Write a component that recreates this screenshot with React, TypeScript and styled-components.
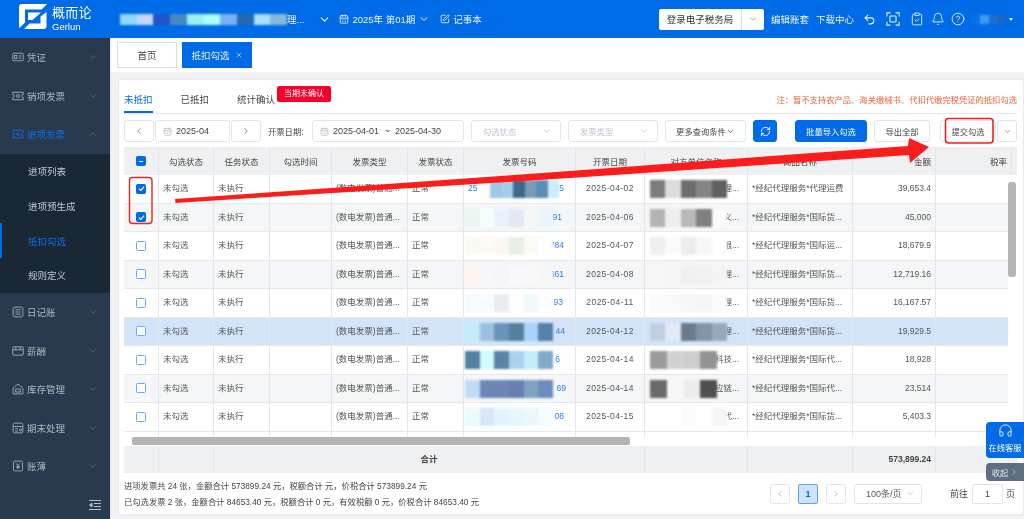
import React from "react";
import styled, { createGlobalStyle } from "styled-components";
import {
  Bell,
  CalendarDays,
  ChevronDown,
  ChevronLeft,
  ChevronRight,
  CircleHelp,
  ClipboardCheck,
  Headphones,
  RefreshCw,
  SquarePen,
  Undo2,
  X,
} from "lucide-react";

const FONT = `"Liberation Sans", "Noto Sans CJK SC", sans-serif`;
const BLUE = "#006be6";
const COLS = "35px 55px 56px 62px 76px 56px 112px 69px 103px 105px 83px 73px";
const HEAD_COLS = "35px 55px 56px 62px 76px 56px 112px 69px 103px 105px 83px 76px 6px";
const FOOT_COLS = "35px 55px 431px 103px 105px 83px 73px";

const GlobalStyle = createGlobalStyle`
  html, body { margin: 0; padding: 0; background: #f0f1f3; }
  * { box-sizing: border-box; }
  #root { width: 1024px; height: 519px; overflow: hidden; }
`;

type NavIconName = "voucher" | "sales" | "journal" | "salary" | "stock" | "closing" | "ledger";

function NavIcon({ name }: { name: NavIconName }) {
  return (
    <svg width="12" height="12" viewBox="0 0 16 16" fill="none" stroke="currentColor" strokeWidth="1.1">
      {name === "voucher" && (
        <>
          <rect x="1" y="3" width="14" height="10" rx="1.5" />
          <rect x="3.5" y="6" width="3" height="4" />
          <path d="M9 6.5h3.5M9 9.5h3.5" />
        </>
      )}
      {name === "sales" && (
        <>
          <path d="M1 3h14v3a2 2 0 0 0 0 4v3H1v-3a2 2 0 0 0 0-4z" />
          <circle cx="8" cy="8" r="2" />
        </>
      )}
      {name === "journal" && (
        <>
          <rect x="1.5" y="1.5" width="13" height="13" rx="2" />
          <path d="M4.5 5h7M4.5 8h7M4.5 11h7" />
        </>
      )}
      {name === "salary" && (
        <>
          <rect x="1" y="2.5" width="14" height="11" rx="1.5" />
          <path d="M1 6.5h14M5 2.5v4M11 2.5v4" />
        </>
      )}
      {name === "stock" && (
        <>
          <path d="M1.5 6.5 8 1.5l6.5 5v8h-13z" />
          <rect x="5" y="8" width="6" height="4" />
        </>
      )}
      {name === "closing" && (
        <>
          <rect x="1.5" y="1.5" width="13" height="13" rx="2" />
          <path d="M1.5 6h13M4 9h4M4 12h4" />
          <circle cx="11.5" cy="10.5" r="1.5" />
        </>
      )}
      {name === "ledger" && (
        <>
          <rect x="2" y="1.5" width="12" height="13" rx="1.5" />
          <path d="M5.5 4.5 8 7.5l2.5-3M8 7.5V12M5.8 8.5h4.4M5.8 10.3h4.4" />
        </>
      )}
    </svg>
  );
}

const LogoMark = styled.svg`
  margin: -5px 0 0;
  flex: none;
`;

function Logo() {
  return (
    <LogoMark width="28" height="25" viewBox="0 0 28 25" fill="#fff">
      <path d="M0 3a3 3 0 0 1 3-3h25l-5.5 5.5H6v13L0.5 24A3 3 0 0 1 0 22z" />
      <path d="M9 8.5h13L13.5 16H9z" />
      <path d="M27.5 8v14a3 3 0 0 1-3 3H5l5.5-5.5H21.5V12.5z" />
    </LogoMark>
  );
}

const Page = styled.div`
  position: relative;
  width: 1024px;
  height: 519px;
  overflow: hidden;
  display: flex;
  flex-direction: column;
  font-family: ${FONT};
  filter: blur(0.3px);
`;

const TopBar = styled.header`
  height: 38px;
  flex: none;
  background: ${BLUE};
  color: #eef5ff;
  display: flex;
  align-items: center;
  font-size: 9.5px;
`;

const Brand = styled.div`
  width: 120px;
  padding-left: 19px;
  display: flex;
  align-items: center;
  gap: 5px;
`;

const BrandText = styled.div`
  display: flex;
  flex-direction: column;
  margin-top: -1px;
  color: #fff;
`;

const BrandName = styled.span`
  font-size: 13px;
  letter-spacing: 0.3px;
  line-height: 16px;
`;

const BrandLatin = styled.span`
  font-size: 9.5px;
  line-height: 11px;
`;

const Mosaic = styled.div<{ $left?: number; $w: number; $h?: number }>`
  display: flex;
  flex: none;
  width: ${(p) => p.$w}px;
  height: ${(p) => p.$h ?? 18}px;
  filter: blur(0.8px);
  ${(p) => (p.$left !== undefined ? `position: absolute; left: ${p.$left}px; top: 5px;` : "")}
`;

const Tile = styled.span<{ $c: string }>`
  flex: 1;
  background: ${(p) => p.$c};
`;

const TopItem = styled.div<{ $ml?: number }>`
  display: flex;
  align-items: center;
  gap: 3px;
  margin-left: ${(p) => p.$ml ?? 0}px;
  white-space: nowrap;
`;

const LoginGroup = styled.div`
  display: flex;
  align-items: center;
  width: 105px;
  height: 21px;
  margin-left: auto;
  background: #fff;
  border-radius: 2px;
  color: #333;
  font-size: 9.5px;
`;

const LoginLabel = styled.span`
  width: 83px;
  text-align: center;
  border-right: 1px solid #dcdfe6;
  line-height: 21px;
`;

const LoginCaret = styled.span`
  flex: 1;
  display: flex;
  justify-content: center;
  color: #9aa0a8;
`;

const TopLink = styled.span<{ $ml: number }>`
  margin-left: ${(p) => p.$ml}px;
  white-space: nowrap;
`;

const TopIcons = styled.div`
  display: flex;
  align-items: center;
  margin-left: 3px;
`;

const IconSlot = styled.span<{ $w: number }>`
  width: ${(p) => p.$w}px;
  display: flex;
  justify-content: center;
`;

const UserCaret = styled.span`
  width: 0;
  height: 0;
  margin: 0 11px 0 3px;
  border-left: 2px solid transparent;
  border-right: 2px solid transparent;
  border-top: 3px solid #fff;
`;

const Body = styled.div`
  flex: 1;
  display: flex;
  min-height: 0;
`;

const Sidebar = styled.nav`
  width: 111px;
  flex: none;
  background: #2a3a4e;
  border-right: 1px solid #e5e7ea;
  display: flex;
  flex-direction: column;
  font-size: 9.5px;
  color: #aeb6c0;
`;

const NavItem = styled.div<{ $active?: boolean }>`
  height: 38.6px;
  flex: none;
  display: flex;
  align-items: center;
  gap: 3px;
  padding: 0 12px 0 12px;
  color: ${(p) => (p.$active ? "#0b6fe5" : "inherit")};
`;

const NavLabel = styled.span`
  flex: 1;
`;

const NavCaret = styled.span<{ $open?: boolean }>`
  display: flex;
  color: #5d6b7c;
  transform: ${(p) => (p.$open ? "rotate(180deg)" : "none")};
`;

const SubMenu = styled.div`
  background: #1a2735;
`;

const SubItem = styled.div<{ $active?: boolean }>`
  height: 34.75px;
  display: flex;
  align-items: center;
  padding-left: ${(p) => (p.$active ? 26 : 28)}px;
  color: ${(p) => (p.$active ? "#0b6fe5" : "#bfc6cf")};
  border-left: ${(p) => (p.$active ? `2px solid ${BLUE}` : "none")};
`;

const Collapse = styled.div`
  margin-top: auto;
  height: 28px;
  display: flex;
  align-items: center;
  justify-content: flex-end;
  padding-right: 9px;
  color: #b7bec8;
`;

const Main = styled.main`
  flex: 1;
  min-width: 0;
  display: flex;
  flex-direction: column;
`;

const TabStrip = styled.div`
  height: 34px;
  flex: none;
  background: #fff;
  display: flex;
  align-items: center;
  gap: 5px;
  padding-left: 6px;
`;

const PageTab = styled.div<{ $active?: boolean }>`
  height: 26px;
  width: ${(p) => (p.$active ? 70 : 60)}px;
  display: flex;
  align-items: center;
  justify-content: center;
  gap: 5px;
  font-size: 9.5px;
  border: 1px solid ${(p) => (p.$active ? BLUE : "#dcdfe6")};
  background: ${(p) => (p.$active ? BLUE : "#fff")};
  color: ${(p) => (p.$active ? "#e6f0ff" : "#444")};
`;

const Content = styled.div`
  flex: 1;
  min-height: 0;
  background: #f0f1f3;
  padding: 7px 0 4px 7px;
`;

const Card = styled.section`
  height: 100%;
  background: #fff;
  border: 1px solid #e9eaec;
  border-radius: 3px;
  padding: 0 6px 0 5px;
  display: flex;
  flex-direction: column;
`;

const TabsRow = styled.div`
  position: relative;
  height: 34px;
  flex: none;
  display: flex;
  align-items: flex-end;
  gap: 28px;
  border-bottom: 1px solid #e6e8ec;
  font-size: 9.5px;
  color: #444;
`;

const InnerTab = styled.div<{ $active?: boolean }>`
  height: 24px;
  line-height: 22px;
  color: ${(p) => (p.$active ? BLUE : "#444")};
  border-bottom: 2px solid ${(p) => (p.$active ? BLUE : "transparent")};
`;

const Badge = styled.span`
  position: absolute;
  left: 153px;
  top: 6px;
  width: 54px;
  height: 16px;
  background: #f5002a;
  border-radius: 2px;
  color: #fff;
  font-size: 8px;
  line-height: 15px;
  text-align: center;
`;

const Note = styled.span`
  margin-left: auto;
  height: 24px;
  line-height: 22px;
  color: #f0603a;
  font-size: 8.3px;
  white-space: nowrap;
`;

const Toolbar = styled.div`
  height: 22px;
  flex: none;
  margin-top: 6px;
  display: flex;
  align-items: center;
  gap: 7px;
  font-size: 9px;
  color: #444;
`;

const Field = styled.div<{ $w: number; $ml?: number; $muted?: boolean }>`
  width: ${(p) => p.$w}px;
  height: 22px;
  flex: none;
  margin-left: ${(p) => p.$ml ?? 0}px;
  border: 1px solid #e3e5ea;
  border-radius: 3px;
  background: #fff;
  display: flex;
  align-items: center;
  justify-content: space-between;
  gap: 4px;
  padding: 0 8px 0 ${(p) => (p.$muted ? 11 : 7)}px;
  color: ${(p) => (p.$muted ? "#c0c4cc" : "#444")};
  font-size: ${(p) => (p.$muted ? 8.3 : 9)}px;
  white-space: nowrap;
`;

const NavBtn = styled.button<{ $ml?: number }>`
  width: 30px;
  height: 22px;
  flex: none;
  margin-left: ${(p) => p.$ml ?? 0}px;
  padding: 0;
  display: flex;
  align-items: center;
  justify-content: center;
  border: 1px solid #e3e5ea;
  border-radius: 3px;
  background: #fff;
  color: #777;
`;

const DateInner = styled.span`
  display: flex;
  align-items: center;
  gap: 4px;
  color: #444;
`;

const Tilde = styled.span`
  width: 16px;
  margin: 0 -4px;
  text-align: center;
`;

const Label = styled.span`
  width: 37px;
  flex: none;
  font-size: 8.3px;
  white-space: nowrap;
`;

const ActionBtn = styled.button<{ $w: number; $ml?: number; $primary?: boolean }>`
  width: ${(p) => p.$w}px;
  height: 22px;
  flex: none;
  margin-left: ${(p) => p.$ml ?? 0}px;
  padding: 0;
  display: flex;
  align-items: center;
  justify-content: center;
  border: 1px solid ${(p) => (p.$primary ? BLUE : "#e3e5ea")};
  border-radius: 3px;
  background: ${(p) => (p.$primary ? BLUE : "#fff")};
  color: ${(p) => (p.$primary ? "#fff" : "#444")};
  font-family: ${FONT};
  font-size: 8.3px;
  white-space: nowrap;
`;

const TableWrap = styled.div`
  margin-top: 5px;
  flex: none;
  font-size: 8.5px;
  color: #555;
`;

const HeadRow = styled.div`
  display: grid;
  grid-template-columns: ${HEAD_COLS};
  height: 28px;
  background: #eff0f2;
  color: #444;
`;

const HeadCell = styled.div<{ $right?: boolean }>`
  display: flex;
  align-items: center;
  justify-content: ${(p) => (p.$right ? "flex-end" : "center")};
  padding: 0 4px;
  border-right: 1px solid #e4e6ec;
`;

const HeadBox = styled(HeadCell)`
  padding: 0;
`;

const ScrollBody = styled.div`
  display: flex;
  height: 262px;
`;

const Rows = styled.div`
  width: 885px;
  overflow: hidden;
`;

const DataRow = styled.div<{ $bg: string }>`
  display: grid;
  grid-template-columns: ${COLS};
  height: 28.5px;
  background: ${(p) => p.$bg};
  border-bottom: 1px solid #e6e8ee;
`;

const Cell = styled.div<{ $align?: "center" | "right"; $pr?: number }>`
  position: relative;
  min-width: 0;
  padding: 0 ${(p) => p.$pr ?? 4}px 0 4px;
  line-height: 27px;
  text-align: ${(p) => p.$align ?? "left"};
  white-space: nowrap;
  border-right: 1px solid #e4e6ec;
`;

const BoxCell = styled(Cell)`
  display: flex;
  align-items: center;
  justify-content: center;
  padding: 0;
`;

const DateText = styled.span`
  letter-spacing: 0.45px;
`;

const InvoiceEdge = styled.span`
  color: #2a80ee;
`;

const InvoiceHead = styled(InvoiceEdge)`
  position: absolute;
  left: 4px;
  top: 0;
`;

const Check = styled.span<{ $on?: boolean }>`
  width: 10px;
  height: 10px;
  border-radius: 1.5px;
  display: flex;
  align-items: center;
  justify-content: center;
  background: ${(p) => (p.$on ? BLUE : "#fff")};
  border: 1px solid ${(p) => (p.$on ? BLUE : "#6aa8f3")};
  color: #fff;
`;

const Minus = styled.span`
  width: 4px;
  height: 1px;
  background: #fff;
`;

const VTrack = styled.div`
  width: 9px;
  flex: none;
  padding-top: 7px;
`;

const VThumb = styled.div`
  width: 8px;
  height: 95px;
  border-radius: 3px;
  background: #b4b4b4;
`;

const HTrack = styled.div`
  height: 9px;
  padding: 0 0 0 8px;
  background: #fff;
`;

const HThumb = styled.div`
  width: 498px;
  height: 8px;
  border-radius: 2px;
  background: #b4b4b4;
`;

const FootRow = styled.div`
  display: grid;
  grid-template-columns: ${FOOT_COLS};
  height: 27px;
  width: 894px;
  background: #eff0f2;
  color: #444;
  font-weight: 700;
`;

const FootCell = styled.div<{ $align?: "center" | "right" }>`
  line-height: 26px;
  padding: 0 4px;
  text-align: ${(p) => p.$align ?? "left"};
  border-right: 1px solid #e4e6ec;
`;

const Footer = styled.div`
  flex: 1;
  display: flex;
  justify-content: space-between;
  align-items: center;
  font-size: 8.3px;
  color: #444;
`;

const Summary = styled.div`
  display: flex;
  flex-direction: column;
  gap: 5.5px;
  line-height: 10.5px;
  margin-top: 1px;
`;

const Pager = styled.div`
  display: flex;
  align-items: center;
  margin-right: 2px;
  font-size: 9px;
`;

const PageBtn = styled.div<{ $on?: boolean }>`
  width: 20px;
  height: 20px;
  margin-right: 8px;
  display: flex;
  align-items: center;
  justify-content: center;
  border: 1px solid ${(p) => (p.$on ? "#5ea1f0" : "#e3e5ea")};
  background: ${(p) => (p.$on ? "#cfe3fb" : "#fff")};
  color: ${(p) => (p.$on ? BLUE : "#bbb")};
  font-weight: ${(p) => (p.$on ? 700 : 400)};
  border-radius: 2px;
`;

const SizeSelect = styled.div`
  width: 68px;
  height: 20px;
  display: flex;
  align-items: center;
  justify-content: space-between;
  padding: 0 6px 0 11px;
  border: 1px solid #e3e5ea;
  border-radius: 2px;
  color: #555;
`;

const GoLabel = styled.span<{ $ml: number }>`
  margin-left: ${(p) => p.$ml}px;
`;

const GoInput = styled.div`
  width: 31px;
  height: 20px;
  margin: 0 3px 0 4px;
  text-align: center;
  line-height: 19px;
  border: 1px solid #e3e5ea;
  border-radius: 2px;
`;

const Service = styled.div`
  position: absolute;
  right: 0;
  top: 422px;
  width: 38px;
  display: flex;
  flex-direction: column;
  align-items: center;
  gap: 5px;
`;

const ServiceBtn = styled.div`
  width: 38px;
  height: 36px;
  padding-top: 1px;
  gap: 4px;
  border-radius: 4px 0 0 4px;
  background: ${BLUE};
  color: #fff;
  font-size: 8.3px;
  line-height: 12px;
  display: flex;
  flex-direction: column;
  align-items: center;
  white-space: nowrap;
`;

const FoldBtn = styled.div`
  width: 38px;
  height: 18px;
  border-radius: 4px 0 0 4px;
  background: #5f6f83;
  color: #dfe3e8;
  font-size: 8.3px;
  display: flex;
  align-items: center;
  justify-content: center;
  gap: 2px;
`;

const Marks = styled.svg`
  position: absolute;
  left: 0;
  top: 0;
  pointer-events: none;
`;

type InvoiceRow = {
  date: string;
  goods: string;
  amount: string;
  head?: boolean;
  tail: string;
  tailEnd: number;
  tailTiles: string[];
  nameEnd: string;
  nameTiles: string[];
  nameW?: number;
  on?: boolean;
  bg: string;
};

const WHITE = "#fff";
const GREY = "#f5f6f7";
const PICKED = "#d3e4f9";
const FREIGHT = "*经纪代理服务*国际货...";
const AGENCY = "*经纪代理服务*国际代...";

const rows: InvoiceRow[] = [
  { date: "2025-04-02", goods: "*经纪代理服务*代理运费", amount: "39,653.4", head: true, tail: "15", tailEnd: 565, tailTiles: ["#fff", "#9cc9e8", "#a8cde8", "#3d6a8c", "#7b9ab8", "#5c8eb3", "#c8effb"], nameEnd: "理...", nameTiles: ["#7c7c7c", "#dcdcdc", "#6d6d6d", "#858585", "#606060"], on: true, bg: WHITE },
  { date: "2025-04-06", goods: FREIGHT, amount: "45,000", tail: "91", tailEnd: 563, tailTiles: ["#eaf6f2", "#f4fdfd", "#e8f2fc", "#e3e8f5", "#f3f6f2", "#eaf4fc"], nameEnd: "义...", nameTiles: ["#b3b3b3", "#eeeeee", "#b8b8b8", "#808080", "#fafafa"], on: true, bg: GREY },
  { date: "2025-04-07", goods: "*经纪代理服务*国际运...", amount: "18,679.9", tail: "784", tailEnd: 565, tailTiles: ["#f8faf3", "#fdf9f3", "#fbf8f3", "#e8efe6", "#fbfaf3", "#fefefe"], nameEnd: "限...", nameTiles: ["#efefef", "#fafafa", "#ececec", "#f7f7f7", "#ffffff"], bg: WHITE },
  { date: "2025-04-08", goods: FREIGHT, amount: "12,719.16", tail: "361", tailEnd: 565, tailTiles: ["#fdf5ee", "#f8f6fc", "#f6f3fb", "#f9f9fc", "#f8f8fa", "#f6f6f7"], nameEnd: "理...", nameTiles: ["#f6f6f6", "#f5f5f5", "#f0f0f0", "#f1f1f1", "#f4f4f4"], bg: GREY },
  { date: "2025-04-11", goods: FREIGHT, amount: "16,167.57", tail: "93", tailEnd: 564, tailTiles: ["#f5faff", "#f5fcff", "#e8ecf1", "#ffffff", "#eef8fd", "#fbfdff"], nameEnd: "理...", nameTiles: ["#fafafa", "#f9f9f9", "#f7f7f7", "#f5f5f5", "#fafafa"], bg: WHITE },
  { date: "2025-04-12", goods: FREIGHT, amount: "19,929.5", tail: "44", tailEnd: 566, tailTiles: ["#c0ecfb", "#9dbfdf", "#6b93b8", "#567f9c", "#a9d2f8", "#5480aa"], nameEnd: "理...", nameTiles: ["#c1cfe0", "#e1eaf5", "#6c7a8a", "#8494a6", "#9aa9ba"], bg: PICKED },
  { date: "2025-04-14", goods: AGENCY, amount: "18,928", tail: "6", tailEnd: 561, tailTiles: ["#53829f", "#d0fcff", "#5983a8", "#a8d3ed", "#c3ecfb", "#7faacb"], nameEnd: "科技...", nameTiles: ["#9a9a9a", "#d1d1d1", "#cdcdcd", "#939393"], nameW: 67, bg: WHITE },
  { date: "2025-04-14", goods: AGENCY, amount: "23,514", tail: "69", tailEnd: 567, tailTiles: ["#c1dbf7", "#6c86b8", "#6c86b8", "#6780ae", "#7fa3bf", "#6d8bbf"], nameEnd: "应链...", nameTiles: ["#6b6b6b", "#f6f6f6", "#ececec", "#4f4f4f"], nameW: 67, bg: GREY },
  { date: "2025-04-15", goods: FREIGHT, amount: "5,403.3", tail: "08", tailEnd: 565, tailTiles: ["#ebfbfd", "#d4e8f9", "#e2f4fb", "#e4f7fd", "#e9f8fd", "#f3fcfe"], nameEnd: "代...", nameTiles: ["#ffffff", "#ffffff", "#fbfbfb", "#ffffff", "#f6f6f6"], bg: WHITE },
];

const heads = ["勾选状态", "任务状态", "勾选时间", "发票类型", "发票状态", "发票号码", "开票日期", "对方单位名称", "商品名称"];
const companyTiles = ["#8fd7ff", "#c5d5fb", "#1f56c8", "#4788c5", "#9cf1f9", "#aefcfb", "#7bb0f2", "#2468b5", "#a7e0fc", "#83bad6"];

function Tiles({ colors }: { colors: string[] }) {
  return (
    <>
      {colors.map((c, i) => (
        <Tile key={i} $c={c} />
      ))}
    </>
  );
}

function NavRow({ icon, label, active, open }: { icon: NavIconName; label: string; active?: boolean; open?: boolean }) {
  return (
    <NavItem $active={active}>
      <NavIcon name={icon} />
      <NavLabel>{label}</NavLabel>
      <NavCaret $open={open}>
        <ChevronDown size={10} />
      </NavCaret>
    </NavItem>
  );
}

export default function App() {
  return (
    <Page>
      <GlobalStyle />
      <TopBar>
        <Brand>
          <Logo />
          <BrandText>
            <BrandName>概而论</BrandName>
            <BrandLatin>Gerlun</BrandLatin>
          </BrandText>
        </Brand>
        <Mosaic $w={167} $h={11}>
          <Tiles colors={companyTiles} />
        </Mosaic>
        <TopItem>理...</TopItem>
        <TopItem $ml={14}>
          <ChevronDown size={13} />
        </TopItem>
        <TopItem $ml={8}>
          <CalendarDays size={10} />
          2025年 第01期
          <ChevronDown size={12} />
        </TopItem>
        <TopItem $ml={10}>
          <SquarePen size={10} />
          记事本
        </TopItem>
        <LoginGroup>
          <LoginLabel>登录电子税务局</LoginLabel>
          <LoginCaret>
            <ChevronDown size={10} />
          </LoginCaret>
        </LoginGroup>
        <TopLink $ml={7}>编辑账套</TopLink>
        <TopLink $ml={7}>下载中心</TopLink>
        <TopIcons>
          <IconSlot $w={24}>
            <Undo2 size={13} />
          </IconSlot>
          <IconSlot $w={24}>
            <svg width="14" height="14" viewBox="0 0 16 16" fill="none" stroke="currentColor" strokeWidth="1.2">
              <path d="M1 5V1h4M11 1h4v4M15 11v4h-4M5 15H1v-4" />
              <rect x="4.5" y="4.5" width="7" height="7" rx="1" />
            </svg>
          </IconSlot>
          <IconSlot $w={23}>
            <ClipboardCheck size={14} strokeWidth={1.5} />
          </IconSlot>
          <IconSlot $w={20}>
            <Bell size={14} strokeWidth={1.5} />
          </IconSlot>
          <IconSlot $w={20}>
            <CircleHelp size={14} strokeWidth={1.5} />
          </IconSlot>
        </TopIcons>
        <TopItem $ml={3}>
          <Mosaic $w={35} $h={9}>
            <Tiles colors={["#0a72e8", "#3f9af5", "#1e70d0", "#1a68c6"]} />
          </Mosaic>
        </TopItem>
        <UserCaret />
      </TopBar>
      <Body>
        <Sidebar>
          <NavRow icon="voucher" label="凭证" />
          <NavRow icon="sales" label="销项发票" />
          <NavRow icon="sales" label="进项发票" active open />
          <SubMenu>
            <SubItem>进项列表</SubItem>
            <SubItem>进项预生成</SubItem>
            <SubItem $active>抵扣勾选</SubItem>
            <SubItem>规则定义</SubItem>
          </SubMenu>
          <NavRow icon="journal" label="日记账" />
          <NavRow icon="salary" label="薪酬" />
          <NavRow icon="stock" label="库存管理" />
          <NavRow icon="closing" label="期末处理" />
          <NavRow icon="ledger" label="账薄" />
          <Collapse>
            <svg width="12" height="12" viewBox="0 0 12 12" fill="none" stroke="currentColor" strokeWidth="1">
              <path d="M0 1.5h12M5 4.5h7M5 7.5h7M0 10.5h12" />
              <path d="M3 4 0.5 6 3 8z" fill="currentColor" />
            </svg>
          </Collapse>
        </Sidebar>
        <Main>
          <TabStrip>
            <PageTab>首页</PageTab>
            <PageTab $active>
              抵扣勾选
              <X size={8} />
            </PageTab>
          </TabStrip>
          <Content>
            <Card>
              <TabsRow>
                <InnerTab $active>未抵扣</InnerTab>
                <InnerTab>已抵扣</InnerTab>
                <InnerTab>统计确认</InnerTab>
                <Badge>当期未确认</Badge>
                <Note>注：暂不支持农产品、海关缴械书、代扣代缴完税凭证的抵扣勾选</Note>
              </TabsRow>
              <Toolbar>
                <NavBtn>
                  <ChevronLeft size={10} />
                </NavBtn>
                <Field $w={75} $ml={-6}>
                  <DateInner>
                    <CalendarDays size={9} color="#bbb" />
                    2025-04
                  </DateInner>
                </Field>
                <NavBtn $ml={-6}>
                  <ChevronRight size={10} />
                </NavBtn>
                <Label>开票日期:</Label>
                <Field $w={152}>
                  <DateInner>
                    <CalendarDays size={9} color="#bbb" />
                    2025-04-01
                    <Tilde>~</Tilde>
                    2025-04-30
                  </DateInner>
                </Field>
                <Field $w={90} $muted>
                  勾选状态
                  <ChevronDown size={10} />
                </Field>
                <Field $w={90} $muted>
                  发票类型
                  <ChevronDown size={10} />
                </Field>
                <ActionBtn $w={81}>
                  更多查询条件
                  <ChevronDown size={9} />
                </ActionBtn>
                <ActionBtn $w={24} $primary>
                  <RefreshCw size={11} />
                </ActionBtn>
                <ActionBtn $w={72} $ml={11} $primary>
                  批量导入勾选
                </ActionBtn>
                <ActionBtn $w={56}>导出全部</ActionBtn>
                <ActionBtn $w={56} $ml={3}>
                  提交勾选
                </ActionBtn>
                <ActionBtn $w={20} $ml={-6}>
                  <ChevronDown size={9} color="#888" />
                </ActionBtn>
              </Toolbar>
              <TableWrap>
                <HeadRow>
                  <HeadBox>
                    <Check $on>
                      <Minus />
                    </Check>
                  </HeadBox>
                  {heads.map((h) => (
                    <HeadCell key={h}>{h}</HeadCell>
                  ))}
                  <HeadCell $right>金额</HeadCell>
                  <HeadCell $right>税率</HeadCell>
                  <span />
                </HeadRow>
                <ScrollBody>
                  <Rows>
                    {rows.map((r, i) => (
                      <DataRow key={i} $bg={r.bg}>
                        <BoxCell>
                          <Check $on={r.on}>
                            {r.on && (
                              <svg width="7" height="7" viewBox="0 0 8 8" fill="none" stroke="#fff" strokeWidth="1.2">
                                <path d="M1 4.2 3.2 6.2 7 1.8" />
                              </svg>
                            )}
                          </Check>
                        </BoxCell>
                        <Cell>未勾选</Cell>
                        <Cell>未执行</Cell>
                        <Cell />
                        <Cell>(数电发票)普通...</Cell>
                        <Cell>正常</Cell>
                        <Cell $align="right" $pr={576 - r.tailEnd}>
                          {r.head && <InvoiceHead>25</InvoiceHead>}
                          <InvoiceEdge>{r.tail}</InvoiceEdge>
                          <Mosaic $left={r.head ? 15 : 1} $w={r.head ? 80 : 88}>
                            <Tiles colors={r.tailTiles} />
                          </Mosaic>
                        </Cell>
                        <Cell $align="center">
                          <DateText>{r.date}</DateText>
                        </Cell>
                        <Cell $align="right" $pr={8}>
                          {r.nameEnd}
                          <Mosaic $left={5} $w={r.nameW ?? 77}>
                            <Tiles colors={r.nameTiles} />
                          </Mosaic>
                        </Cell>
                        <Cell>{r.goods}</Cell>
                        <Cell $align="right">{r.amount}</Cell>
                        <Cell />
                      </DataRow>
                    ))}
                    <DataRow $bg={WHITE}>
                      {Array.from({ length: 12 }, (_, i) => (
                        <Cell key={i} />
                      ))}
                    </DataRow>
                  </Rows>
                  <VTrack>
                    <VThumb />
                  </VTrack>
                </ScrollBody>
                <HTrack>
                  <HThumb />
                </HTrack>
                <FootRow>
                  <FootCell />
                  <FootCell />
                  <FootCell $align="center">合计</FootCell>
                  <FootCell />
                  <FootCell />
                  <FootCell $align="right">573,899.24</FootCell>
                  <FootCell />
                </FootRow>
              </TableWrap>
              <Footer>
                <Summary>
                  <span>进项发票共 24 张，金额合计 573899.24 元，税额合计 元，价税合计 573899.24 元</span>
                  <span>已勾选发票 2 张，金额合计 84653.40 元，税额合计 0 元，有效税额 0 元，价税合计 84653.40 元</span>
                </Summary>
                <Pager>
                  <PageBtn>
                    <ChevronLeft size={10} />
                  </PageBtn>
                  <PageBtn $on>1</PageBtn>
                  <PageBtn>
                    <ChevronRight size={10} />
                  </PageBtn>
                  <SizeSelect>
                    100条/页
                    <ChevronDown size={9} color="#bbb" />
                  </SizeSelect>
                  <GoLabel $ml={28}>前往</GoLabel>
                  <GoInput>1</GoInput>
                  <span>页</span>
                </Pager>
              </Footer>
            </Card>
          </Content>
        </Main>
      </Body>
      <Service>
        <ServiceBtn>
          <Headphones size={15} strokeWidth={1.4} />
          在线客服
        </ServiceBtn>
        <FoldBtn>
          收起
          <ChevronRight size={8} />
        </FoldBtn>
      </Service>
      <Marks width="1024" height="519" viewBox="0 0 1024 519">
        <rect x="129.5" y="177.5" width="22.5" height="46" rx="3" fill="none" stroke="#f02020" strokeWidth="1.4" />
        <rect x="945.5" y="118.5" width="47.5" height="24.5" rx="3" fill="none" stroke="#f02020" strokeWidth="1.6" />
        <path d="M175 199 L570 171 L908 146 L909 138 L929 147 L910 163 L909 155 L570 178 L175.5 203 Z" fill="#fb1c1c" />
      </Marks>
    </Page>
  );
}
